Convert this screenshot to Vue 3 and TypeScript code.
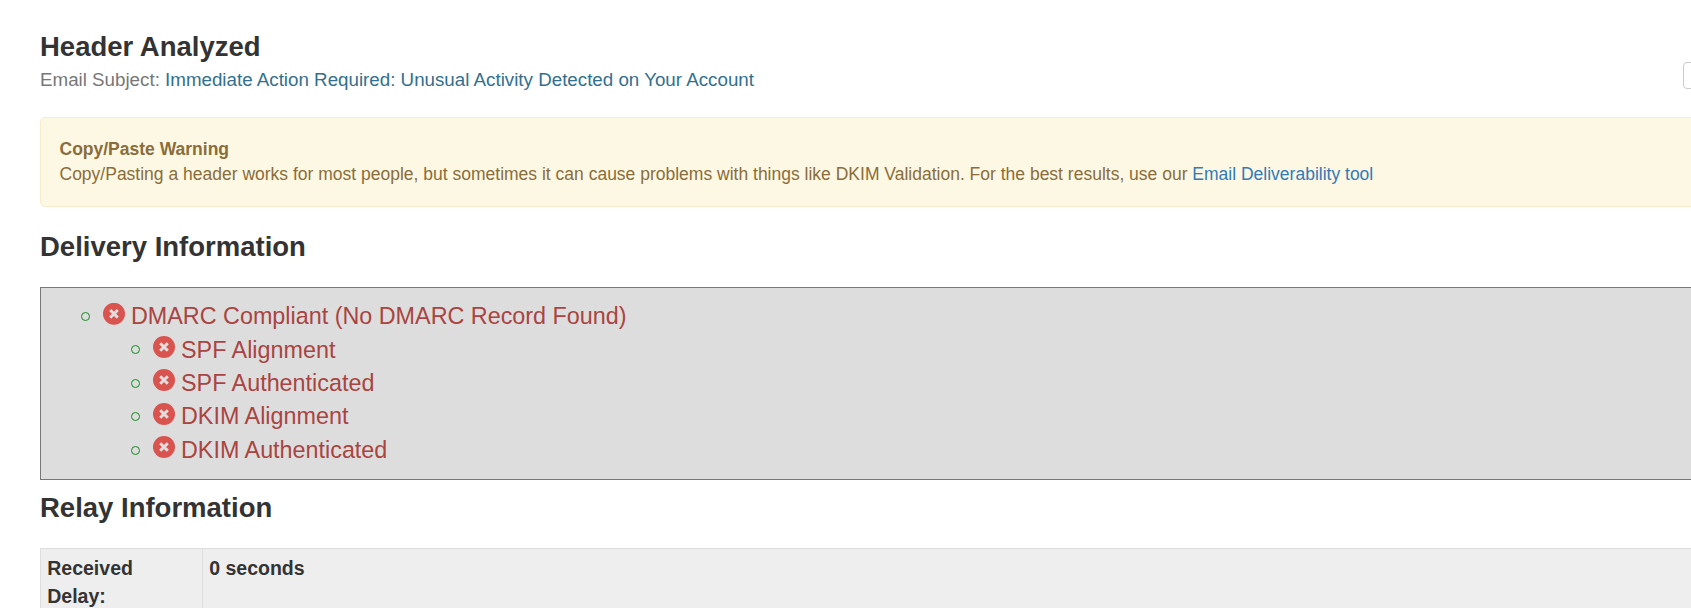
<script setup lang="ts">
const checks: string[] = ['SPF Alignment', 'SPF Authenticated', 'DKIM Alignment', 'DKIM Authenticated']
</script>

<template>
  <main class="page">
    <header class="top">
      <div>
        <h1 class="heading">Header Analyzed</h1>
        <p class="subject">Email Subject: <span>Immediate Action Required: Unusual Activity Detected on Your Account</span></p>
      </div>
      <button class="action" type="button" aria-label="Options"></button>
    </header>

    <section class="warning">
      <strong>Copy/Paste Warning</strong>
      <p>Copy/Pasting a header works for most people, but sometimes it can cause problems with things like DKIM Validation. For the best results, use our <a href="#">Email Deliverability tool</a></p>
    </section>

    <h2 class="heading delivery-title">Delivery Information</h2>
    <section class="results">
      <div class="check">
        <i class="ring"></i>
        <svg class="fail" viewBox="0 0 22 22"><circle cx="11" cy="10.8" r="11" /><path d="M7.2 7l7.6 7.6M14.8 7l-7.6 7.6" /></svg>
        <span>DMARC Compliant (No DMARC Record Found)</span>
      </div>
      <div v-for="check in checks" :key="check" class="check nested">
        <i class="ring"></i>
        <svg class="fail" viewBox="0 0 22 22"><circle cx="11" cy="11" r="11" /><path d="M7.2 7.2l7.6 7.6M14.8 7.2l-7.6 7.6" /></svg>
        <span>{{ check }}</span>
      </div>
    </section>

    <h2 class="heading relay-title">Relay Information</h2>
    <div class="relay">
      <div class="cell label">Received<br>Delay:</div>
      <div class="cell">0 seconds</div>
    </div>
  </main>
</template>

<style>
html,
body {
  overflow: hidden;
  background: #fff;
}
</style>

<style scoped>
.page {
  box-sizing: border-box;
  width: 1740px;
  height: 608px;
  overflow: hidden;
  padding: 32px 0 0 40px;
  font-family: "Liberation Sans", Arial, sans-serif;
  font-size: 17.5px;
  line-height: 25px;
  color: #333;
}
p {
  margin: 0;
}
.heading {
  margin: 0;
  font-size: 27.5px;
  line-height: 30px;
  font-weight: 700;
}
.top {
  display: flex;
  height: 85px;
}
.subject {
  margin-top: 4px;
  font-size: 18.76px;
  line-height: 27px;
  color: #777;
}
.subject span {
  color: #31708f;
}
.action {
  box-sizing: border-box;
  width: 57px;
  height: 27px;
  margin: 30px 0 0 auto;
  padding: 0;
  border: 1px solid #ccc;
  border-radius: 4px;
  background: #fff;
}
.warning {
  box-sizing: border-box;
  height: 90px;
  padding: 19px 19px 19px 18.5px;
  border: 1px solid #faebcc;
  border-radius: 5px;
  background: #fcf8e3;
  color: #8a6d3b;
}
.warning strong {
  display: block;
}
.warning a {
  color: #337ab7;
  text-decoration: none;
}
.delivery-title {
  margin-top: 25px;
}
.results {
  box-sizing: border-box;
  height: 193px;
  margin-top: 25px;
  padding: 12px 0 0 40px;
  border: 1px solid #777;
  background: #ddd;
  color: #a94442;
  font-size: 23.35px;
  line-height: 34px;
}
.check {
  display: flex;
  height: 33.4px;
}
.check span {
  margin-top: -0.8px;
}
.nested {
  margin-left: 50px;
}
.ring {
  box-sizing: border-box;
  width: 9px;
  height: 9px;
  margin: 12px 13px 0 0;
  border: 1px solid #128a22;
  border-radius: 50%;
}
.fail {
  width: 22px;
  height: 22px;
  margin: 2.7px 6px 0 0;
}
.fail circle {
  fill: #d9534f;
}
.fail path {
  fill: none;
  stroke: #e3dddd;
  stroke-width: 3;
}
.relay-title {
  margin-top: 13px;
}
.relay {
  display: flex;
  height: 90px;
  margin-top: 25px;
  border-top: 1px solid #ddd;
  border-left: 1px solid #ddd;
  background: #eee;
  font-size: 19.5px;
  line-height: 28px;
  font-weight: 700;
}
.cell {
  box-sizing: border-box;
  padding: 5px 6.25px;
}
.label {
  width: 162px;
  border-right: 1px solid #ddd;
}
</style>
